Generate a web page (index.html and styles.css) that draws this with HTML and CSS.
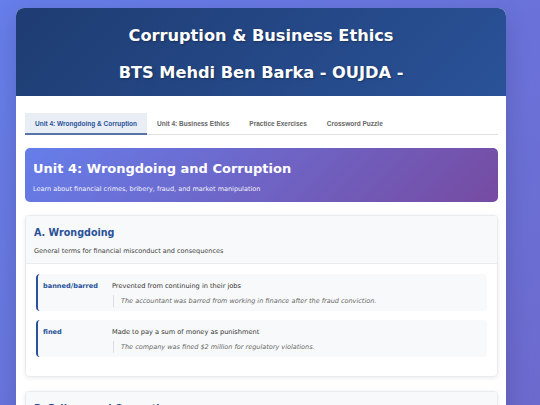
FILE: index.html
```html
<!DOCTYPE html>
<html lang="en">
<head>
<meta charset="utf-8">
<title>Corruption &amp; Business Ethics</title>
<link rel="stylesheet" href="styles.css">
</head>
<body>
<div class="container">
  <header class="header">
    <h1>Corruption &amp; Business Ethics</h1>
    <h1>BTS Mehdi Ben Barka - OUJDA -</h1>
  </header>
  <main class="content">
    <nav class="tabs">
      <button class="tab active">Unit 4: Wrongdoing &amp; Corruption</button>
      <button class="tab">Unit 4: Business Ethics</button>
      <button class="tab">Practice Exercises</button>
      <button class="tab">Crossword Puzzle</button>
    </nav>
    <section class="unit-banner">
      <h2>Unit 4: Wrongdoing and Corruption</h2>
      <p>Learn about financial crimes, bribery, fraud, and market manipulation</p>
    </section>
    <section class="card">
      <div class="card-head">
        <h3>A. Wrongdoing</h3>
        <p>General terms for financial misconduct and consequences</p>
      </div>
      <div class="card-body">
        <div class="term">
          <div class="word">banned/barred</div>
          <div class="def">
            <div class="meaning">Prevented from continuing in their jobs</div>
            <div class="example">The accountant was barred from working in finance after the fraud conviction.</div>
          </div>
        </div>
        <div class="term">
          <div class="word">fined</div>
          <div class="def">
            <div class="meaning">Made to pay a sum of money as punishment</div>
            <div class="example">The company was fined $2 million for regulatory violations.</div>
          </div>
        </div>
      </div>
    </section>
    <section class="card">
      <div class="card-head">
        <h3>B. Bribery and Corruption</h3>
        <p>Terms related to illegal payments and abuse of power</p>
      </div>
      <div class="card-body">
        <div class="term">
          <div class="word">bribe</div>
          <div class="def">
            <div class="meaning">Money or favours given to influence someone dishonestly</div>
            <div class="example">The official accepted a bribe to approve the contract.</div>
          </div>
        </div>
        <div class="term">
          <div class="word">kickback</div>
          <div class="def">
            <div class="meaning">An illegal payment made in return for a favour</div>
            <div class="example">The manager received kickbacks from suppliers.</div>
          </div>
        </div>
      </div>
    </section>
  </main>
</div>
</body>
</html>
```
FILE: styles.css
```css
* { box-sizing: border-box; }
html, body { margin: 0; }
body {
  font-family: "DejaVu Sans", Verdana, sans-serif;
  background: linear-gradient(135deg, #667eea 0%, #764ba2 100%);
  min-height: 1800px;
  padding: 8px 34px 20px 16px;
  color: #333;
}
.container {
  width: 490px;
  background: #fff;
  border-radius: 8px;
  overflow: hidden;
  box-shadow: 0 8px 24px rgba(0,0,0,0.15);
}
.header {
  background: linear-gradient(135deg, #1e3c72 0%, #2a5298 100%);
  height: 88px;
  padding-top: 9px;
  text-align: center;
  color: #fff;
}
.header h1 {
  margin: 0;
  font-size: 16.2px;
  line-height: 37px;
  font-weight: bold;
  text-shadow: 1px 1px 2px rgba(0,0,0,0.3);
}
.content { padding: 17px 8px 20px 9px; }
.tabs {
  display: flex;
  border-bottom: 1px solid #dee2e6;
  margin-bottom: 13px;
}
.tab {
  font-family: "Liberation Sans", Arial, sans-serif;
  font-size: 6.5px;
  font-weight: bold;
  color: #666;
  background: none;
  border: none;
  border-bottom: 2px solid transparent;
  margin-bottom: -1px;
  height: 22px;
  padding: 0 10px;
  cursor: pointer;
}
.tab.active {
  background: #e9eef6;
  color: #2a5298;
  border-bottom-color: #5a73a8;
}
.unit-banner {
  background: linear-gradient(135deg, #667eea 0%, #764ba2 100%);
  color: #fff;
  border-radius: 5px;
  height: 54px;
  padding: 11px 8px 0;
  margin-bottom: 13px;
}
.unit-banner h2 {
  margin: 0 0 7px;
  font-size: 13px;
  line-height: 19px;
}
.unit-banner p {
  margin: 0;
  font-size: 6.5px;
  opacity: 0.92;
}
.card {
  border: 1px solid #e9ecef;
  border-radius: 4px;
  box-shadow: 0 1px 4px rgba(0,0,0,0.08);
  margin-bottom: 14px;
  overflow: hidden;
}
.card-head {
  background: #f8f9fa;
  height: 48px;
  padding: 9px 8px 0;
  border-bottom: 1px solid #e9ecef;
}
.card-head h3 {
  margin: 0 0 7px;
  font-size: 9.6px;
  line-height: 15px;
  color: #2a5298;
}
.card-head p {
  margin: 0;
  font-size: 6.5px;
  color: #444;
}
.card-body {
  padding: 10px 10px 19px;
  display: flex;
  flex-direction: column;
  gap: 9px;
}
.term {
  display: flex;
  background: #f8f9fa;
  border-left: 2px solid #2a5298;
  border-radius: 4px;
  height: 37px;
  padding: 8px 6px 0 5px;
}
.word {
  width: 69px;
  flex: none;
  font-size: 6.6px;
  font-weight: bold;
  color: #2a5298;
}
.meaning {
  font-size: 6.6px;
  color: #333;
  margin-bottom: 5px;
}
.example {
  font-size: 6.5px;
  font-style: italic;
  color: #666;
  border-left: 1px solid #ddd;
  padding: 2px 0 2px 7px;
  margin-left: 1px;
}
```
